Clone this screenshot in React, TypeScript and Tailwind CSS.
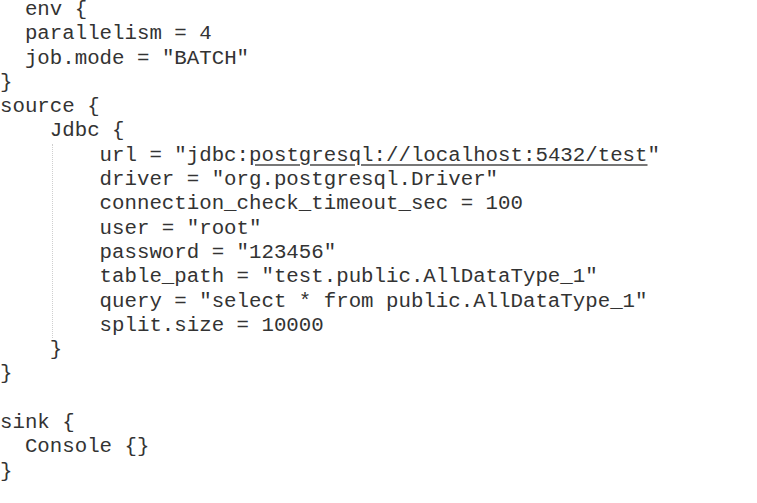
const Line = ({ text }: { text: string }) => (
  <div className="h-[24.3px] whitespace-pre">{text === '' ? ' ' : text}</div>
);

const App = () => {
  const inner = [
    'driver = "org.postgresql.Driver"',
    'connection_check_timeout_sec = 100',
    'user = "root"',
    'password = "123456"',
    'table_path = "test.public.AllDataType_1"',
    'query = "select * from public.AllDataType_1"',
    'split.size = 10000',
  ];

  return (
    <div className="w-[757px] h-[503px] overflow-hidden bg-white">
      <div className="-mt-[2px] font-['Liberation_Mono','Courier_New',monospace] text-[20.75px] leading-[24.3px] text-[#333]">
        <Line text="  env {" />
        <Line text="  parallelism = 4" />
        <Line text='  job.mode = "BATCH"' />
        <Line text="}" />
        <Line text="source {" />
        <Line text="    Jdbc {" />
        <div className="ml-[52px] border-l border-dotted border-[#cfcfcf] pl-[46.6px]">
          <div className="h-[24.3px] whitespace-pre">
            url = "jdbc:
            <span className="underline decoration-[#777] underline-offset-[3px]">postgresql://localhost:5432/test</span>
            "
          </div>
          {inner.map((t) => (
            <Line key={t} text={t} />
          ))}
        </div>
        <Line text="    }" />
        <Line text="}" />
        <Line text="" />
        <Line text="sink {" />
        <Line text="  Console {}" />
        <Line text="}" />
      </div>
    </div>
  );
};

export default App;
